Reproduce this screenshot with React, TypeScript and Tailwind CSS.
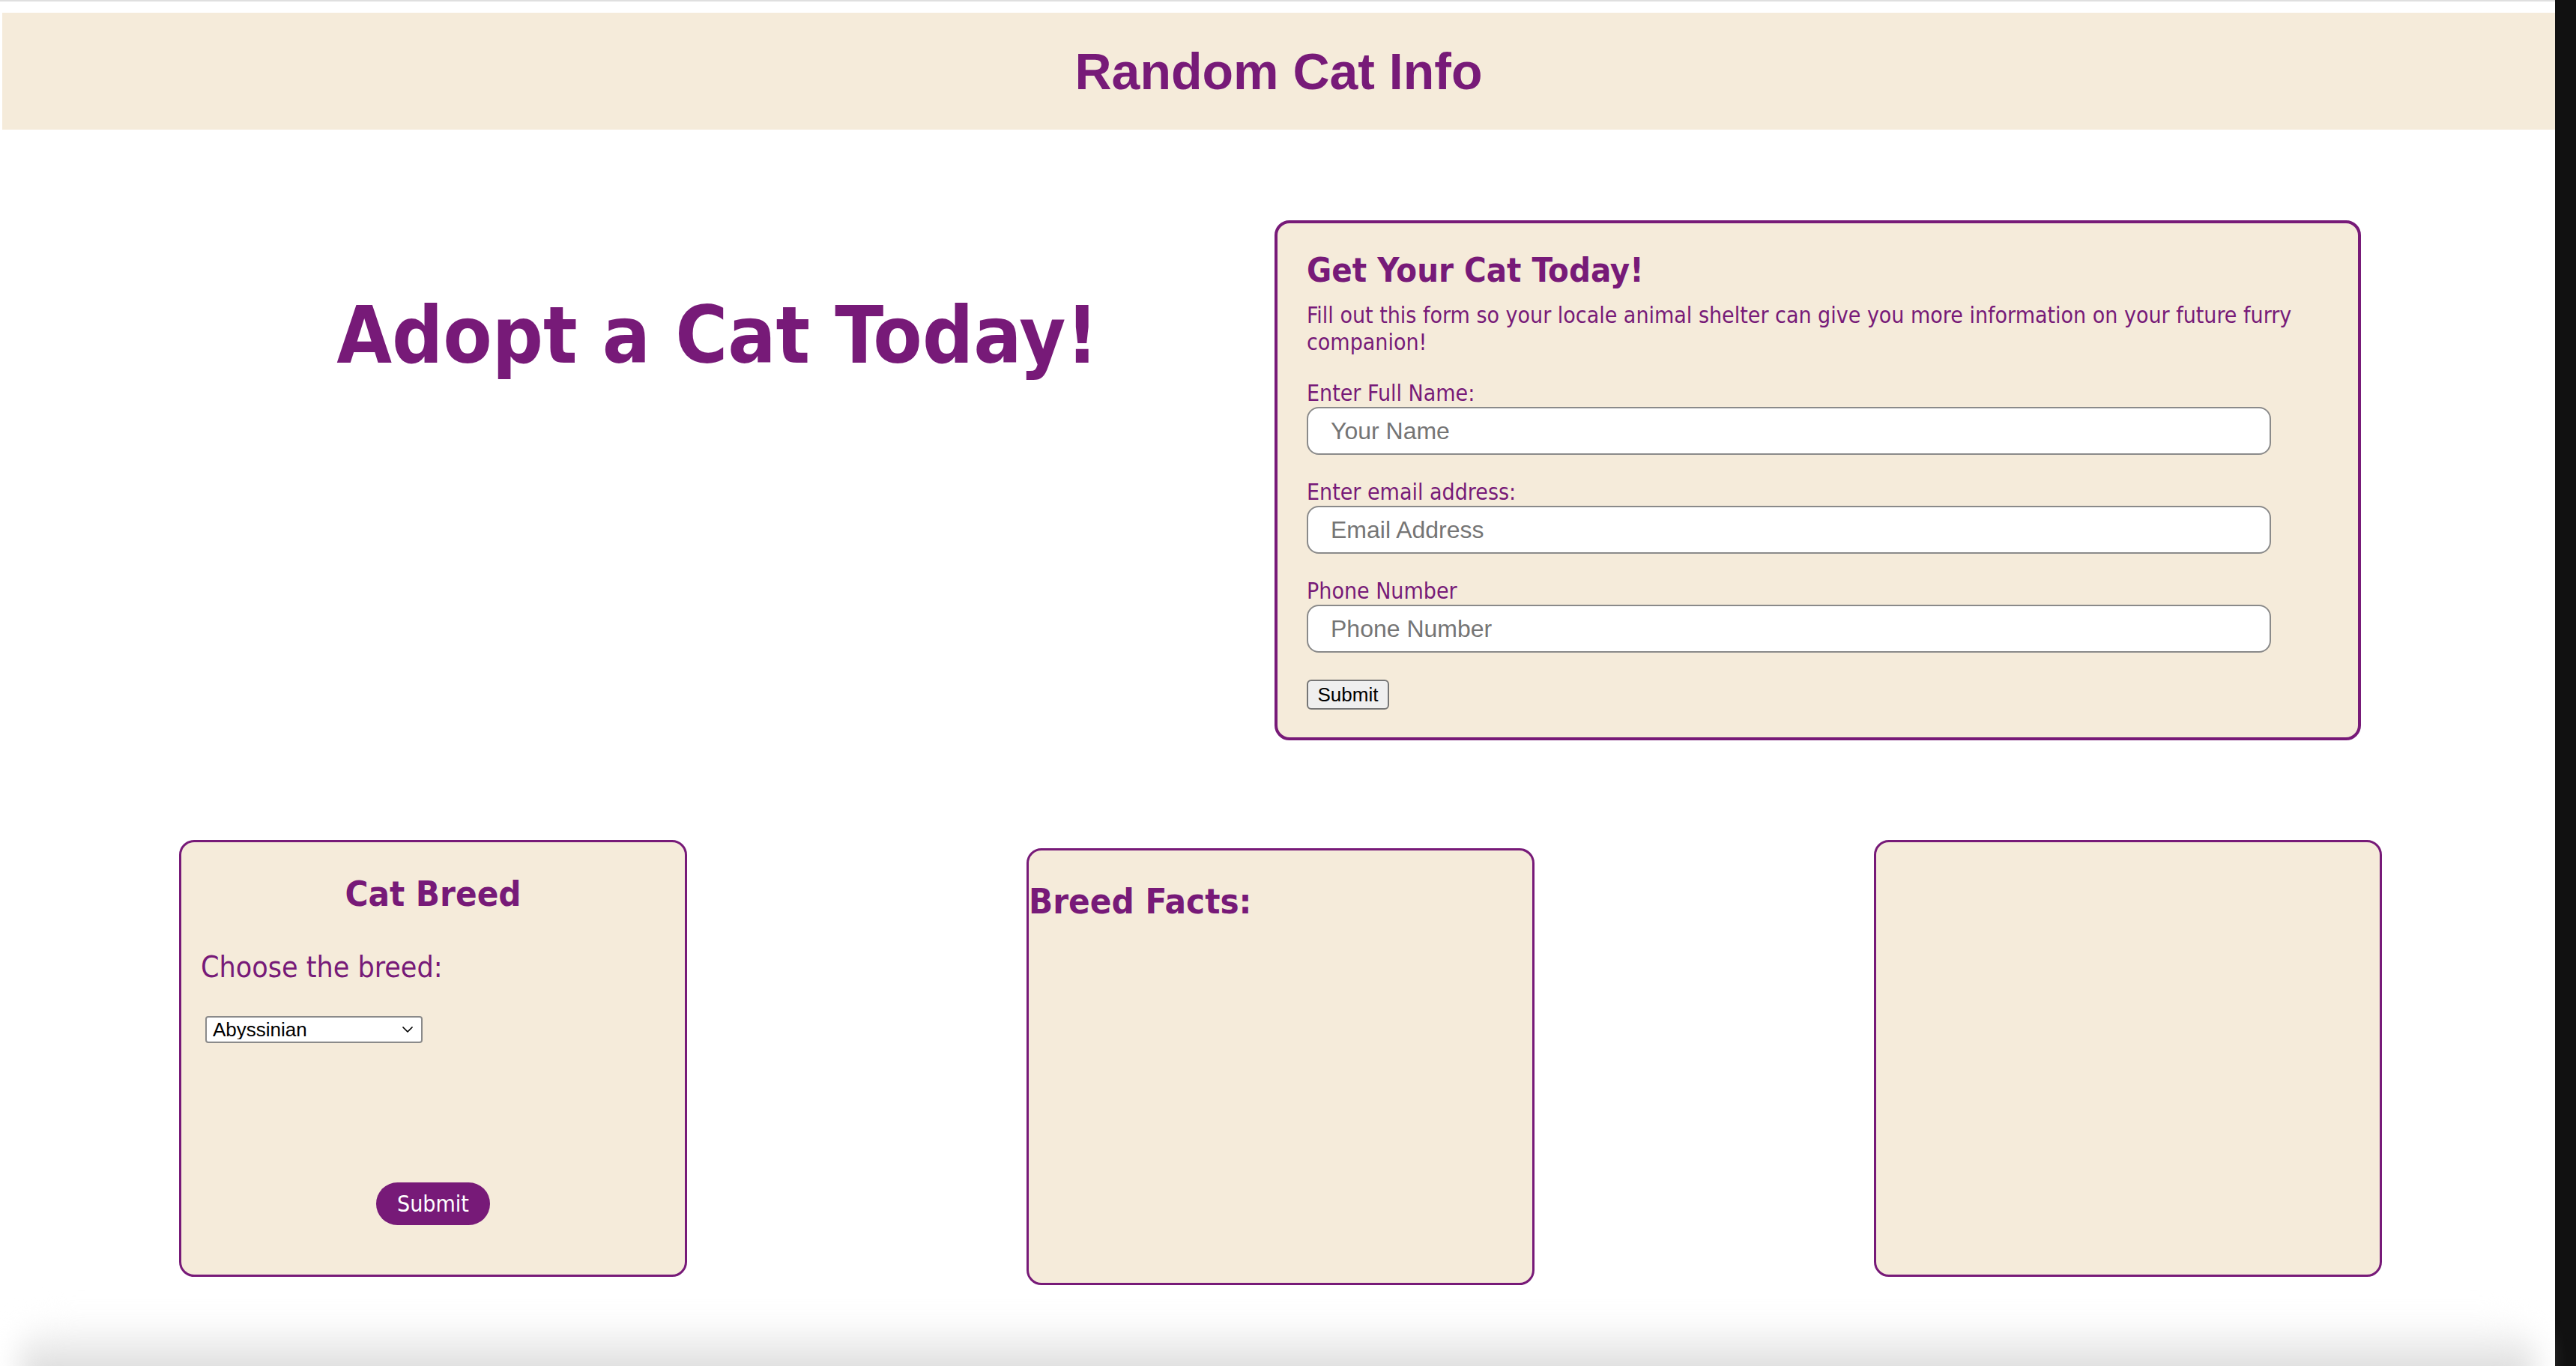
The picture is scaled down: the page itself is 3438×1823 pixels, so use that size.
import { ChevronDown } from 'lucide-react';

const FIELDS = [
  { label: 'Enter Full Name:', placeholder: 'Your Name', type: 'text' },
  { label: 'Enter email address:', placeholder: 'Email Address', type: 'email' },
  { label: 'Phone Number', placeholder: 'Phone Number', type: 'tel' },
];

const tahoma = "font-['DejaVu_Sans_Condensed','DejaVu_Sans',sans-serif]";

function AdoptForm() {
  return (
    <div className="w-[1450px] border-[4px] border-[#771a78] rounded-[20px] bg-[#f5ebda] pt-[36px] pb-[37px] pl-[39px] pr-[39px] text-[#771a78]">
      <h2 className={`${tahoma} font-bold text-[45px] leading-[54px]`}>Get Your Cat Today!</h2>
      <p className={`${tahoma} text-[30px] leading-[36px] mt-[15px]`}>
        Fill out this form so your locale animal shelter can give you more information on your future furry companion!
      </p>
      <form className="flex flex-col" onSubmit={e => e.preventDefault()}>
        {FIELDS.map(f => (
          <div key={f.label} className="mt-[32px]">
            <label className={`${tahoma} block text-[30px] leading-[36px]`}>{f.label}</label>
            <input
              type={f.type}
              placeholder={f.placeholder}
              className="w-[1287px] h-[64px] bg-white border-2 border-[#8a8a8a] rounded-[16px] pl-[30px] font-['Liberation_Sans',Arial,sans-serif] text-[32px] text-black placeholder:text-[#757575] outline-none"
            />
          </div>
        ))}
        <div className="mt-[36px]">
          <button
            type="submit"
            className="w-[110px] h-[40px] bg-[#efefef] border-2 border-[#767676] rounded-[6px] font-['Liberation_Sans',Arial,sans-serif] text-[26px] leading-none text-black"
          >
            Submit
          </button>
        </div>
      </form>
    </div>
  );
}

function BreedCard() {
  return (
    <div className="w-[678px] h-[583px] border-[3px] border-[#771a78] rounded-[20px] bg-[#f5ebda] text-[#771a78] pt-[41px] flex flex-col">
      <h2 className={`${tahoma} font-bold text-[47px] leading-[56px] text-center`}>Cat Breed</h2>
      <p className={`${tahoma} text-[39px] leading-[46px] mt-[47px] pl-[26px]`}>Choose the breed:</p>
      <div className="relative w-[290px] h-[36px] mt-[42px] ml-[32px] shrink-0">
        <select className="appearance-none w-full h-full bg-white border-2 border-[#8a8a8a] rounded-[4px] pl-[8px] font-['Liberation_Sans',Arial,sans-serif] text-[26px] leading-none text-black outline-none">
          <option>Abyssinian</option>
          <option>Aegean</option>
          <option>American Bobtail</option>
        </select>
        <ChevronDown className="absolute right-[8px] top-[6px] w-[24px] h-[24px] text-black pointer-events-none" strokeWidth={1.75} />
      </div>
      <div className="flex justify-center mt-[186px]">
        <button className={`${tahoma} w-[152px] h-[57px] rounded-full bg-[#771a78] text-white text-[30px] leading-none`}>
          Submit
        </button>
      </div>
    </div>
  );
}

function FactsCard() {
  return (
    <div className="w-[678px] h-[583px] mt-[11px] border-[3px] border-[#771a78] rounded-[20px] bg-[#f5ebda] text-[#771a78] pt-[40px]">
      <h2 className={`${tahoma} font-bold text-[47px] leading-[56px]`}>Breed Facts:</h2>
    </div>
  );
}

export default function App() {
  return (
    <div className="h-[1823px] overflow-hidden flex items-start bg-white">
      <div className="w-[3410px] shrink-0">
        {/* top strip */}
        <div className="h-[2px] bg-[#dfdfdf]" />
        <header className="mt-[15px] ml-[3px] h-[156px] bg-[#f5ebda] flex items-center justify-center">
          <h1 className="font-['Liberation_Sans',Arial,sans-serif] font-bold text-[68px] leading-[78px] text-[#771a78]">
            Random Cat Info
          </h1>
        </header>

        {/* hero + form */}
        <section className="flex mt-[121px]">
          <div className="w-[1701px] shrink-0 pl-[214px] pt-[90px]">
            <h1 className={`${tahoma} font-bold text-[106px] leading-[128px] text-center text-[#771a78]`}>
              Adopt a Cat Today!
            </h1>
          </div>
          <AdoptForm />
        </section>

        {/* cards */}
        <section className="flex items-start pl-[239px] gap-[453px] mt-[133px]">
          <BreedCard />
          <FactsCard />
          <div className="w-[678px] h-[583px] border-[3px] border-[#771a78] rounded-[20px] bg-[#f5ebda]" />
        </section>

        {/* bottom shade */}
        <div className="mt-[44px] mx-[24px] h-[110px] rounded-[60px] bg-gradient-to-b from-white to-[#cdcdcd] blur-[18px]" />
      </div>
      <div className="flex-1 self-stretch bg-[#111111]" />
    </div>
  );
}
